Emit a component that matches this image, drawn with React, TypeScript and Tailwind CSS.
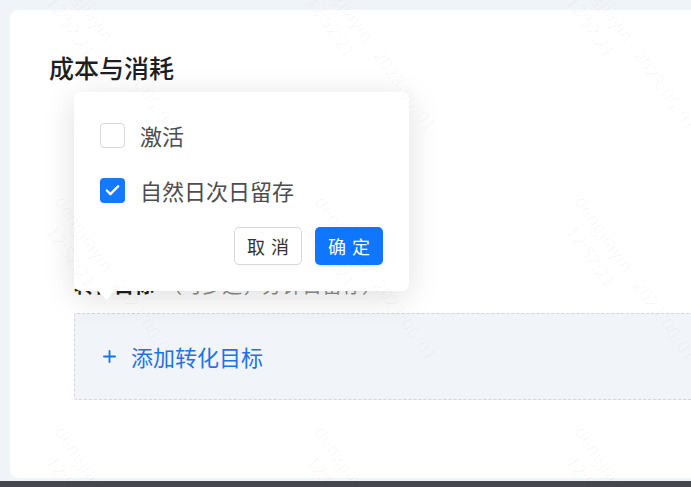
import { Plus, Check } from 'lucide-react';

const font = { fontFamily: '"Noto Sans CJK SC", "Noto Sans", sans-serif' };

// 水印（极淡的斜向文字）
function Watermark() {
  const cols = [70, 330, 590];
  const rows = [-40, 190, 420];
  return (
    <div className="pointer-events-none absolute inset-0 overflow-hidden">
      {cols.map((x) =>
        rows.map((y) => (
          <div
            key={`${x}-${y}`}
            className="absolute origin-top-left rotate-[55deg] text-[18px] leading-[24px] text-black/[0.03] whitespace-nowrap"
            style={{ left: x, top: y }}
          >
            <div>dengjiayin - 2023/06/01</div>
            <div className="pl-[20px]">12:52:21</div>
          </div>
        ))
      )}
    </div>
  );
}

function CheckRow({ label, checked }: { label: string; checked?: boolean }) {
  return (
    <div className="flex items-center gap-[15px] h-[26px]">
      {checked ? (
        <span className="w-[25px] h-[25px] rounded-[4px] bg-[#1677ff] flex items-center justify-center">
          <Check size={17} strokeWidth={3.4} className="text-white" />
        </span>
      ) : (
        <span className="w-[25px] h-[25px] rounded-[4px] border border-[#d9d9d9] bg-white" />
      )}
      <span className="text-[22px] text-[#4d4d4d]">{label}</span>
    </div>
  );
}

export default function App() {
  return (
    <div className="relative w-[691px] h-[487px] overflow-hidden bg-[#f0f3f7] flex flex-col" style={font}>
      <div className="pl-[10px] pt-[10px] flex-1">
        <div className="relative w-[720px] h-[468px] rounded-[8px] bg-white pl-[39px] pt-[41px]">
          <h2 className="text-[25px] leading-[32px] font-medium text-[#1f1f1f]">成本与消耗</h2>

          <div className="mt-[188px] pl-[25px]">
            <div className="flex items-baseline gap-2 h-[28px] text-[20px] leading-[28px]">
              <span className="font-bold text-[#1f1f1f]">转化目标</span>
              <span className="text-[#8c8c8c]">（可多选，分钟日留存）</span>
            </div>
            <div className="mt-[14px] h-[87px] border border-dashed border-[#d3d7dc] rounded-l-[3px] bg-[#f1f4f8] flex items-center pl-[25px] gap-[12px] text-[#1a73e8]">
              <Plus size={19} strokeWidth={2.3} />
              <span className="text-[22px]">添加转化目标</span>
            </div>
          </div>

          {/* 弹出层 */}
          <div className="absolute left-[64px] top-[82px] w-[335px] h-[199px] rounded-[7px] bg-white shadow-[0_6px_32px_rgba(0,0,0,0.13)]">
            <div className="absolute left-[26px] -bottom-[6px] w-[13px] h-[13px] rotate-45 bg-white" />
            <div className="relative flex flex-col h-full px-[26px] pt-[30px]">
              <CheckRow label="激活" />
              <div className="mt-[29px]">
                <CheckRow label="自然日次日留存" checked />
              </div>
              <div className="mt-[24px] flex justify-end gap-[13px]">
                <button className="w-[68px] h-[38px] rounded-[5px] border border-[#d9d9d9] bg-white text-[18px] text-[#333] shadow-[0_2px_0_rgba(0,0,0,0.02)]">
                  取<span className="ml-[6px]">消</span>
                </button>
                <button className="w-[68px] h-[38px] rounded-[5px] bg-[#0f76ff] text-[18px] text-white shadow-[0_2px_0_rgba(5,145,255,0.1)]">
                  确<span className="ml-[6px]">定</span>
                </button>
              </div>
            </div>
          </div>
        </div>
      </div>
      <div className="h-[6px] bg-[#44484d]" />
      <Watermark />
    </div>
  );
}
